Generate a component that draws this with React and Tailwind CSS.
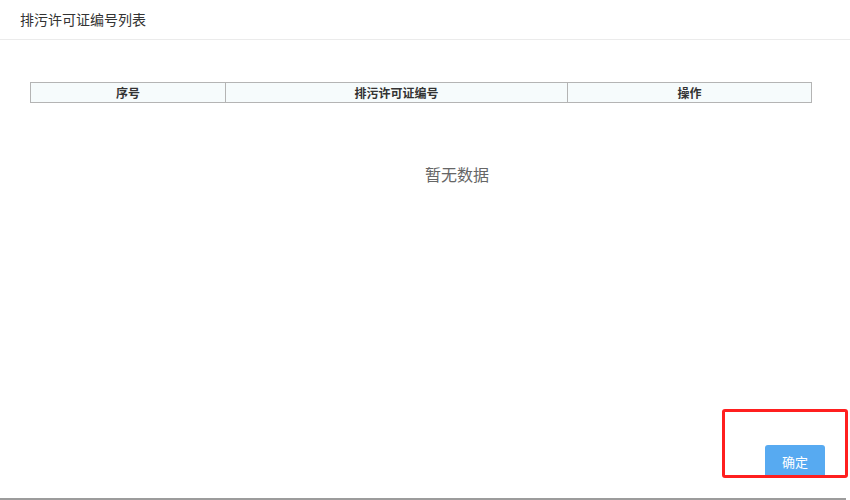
import React from 'react';

const App = () => {
  return (
    <div
      className="relative w-[850px] h-[500px] bg-white flex flex-col text-[#333] overflow-hidden"
      style={{ fontFamily: '"Noto Sans CJK SC", "Liberation Sans", sans-serif' }}
    >
      <div className="h-[40px] shrink-0 border-b border-[#ebebeb] flex items-center px-[20px] text-[14px]">
        排污许可证编号列表
      </div>

      <div className="flex-1 px-[30px] pt-[42px]">
        <div className="w-[782px] h-[21px] grid grid-cols-[195px_342px_1fr] border border-[#b4b4b4] bg-[#f6fbfc] text-[12px] font-bold leading-[19px]">
          <div className="text-center border-r border-[#b4b4b4]">序号</div>
          <div className="text-center border-r border-[#b4b4b4]">排污许可证编号</div>
          <div className="text-center">操作</div>
        </div>
        <div className="ml-[395px] mt-[59px] text-[16px] text-[#666] leading-[24px]">暂无数据</div>
      </div>

      <div className="flex justify-end pr-[25px] pb-[20px]">
        <button className="w-[60px] h-[33px] rounded-[3px] bg-[#57aaf1] text-white text-[13px]">确定</button>
      </div>
      <div className="h-[2px] bg-[#9c9c9c] mr-[4px]"></div>

      <div className="absolute left-[722px] top-[409px] w-[126px] h-[69px] border-[3px] border-[#ff1f1f] rounded-[3px] pointer-events-none"></div>
    </div>
  );
};

export default App;
